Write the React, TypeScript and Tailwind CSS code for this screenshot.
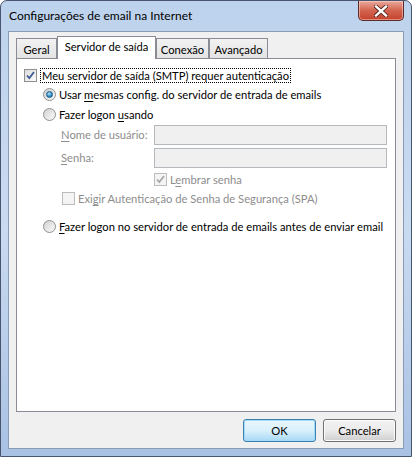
import * as React from "react";

const font = { fontFamily: 'Lato, "Noto Sans", "Segoe UI", Tahoma, sans-serif' };

function CheckBox({ checked, disabled }: { checked?: boolean; disabled?: boolean }) {
  return (
    <span
      className={
        "flex h-[13px] w-[13px] shrink-0 items-center justify-center border " +
        (disabled ? "border-[#bcbcbc] bg-[#f4f4f4]" : "border-[#8e8f8f] bg-gradient-to-br from-[#dcdcdc] to-[#fbfbfb]")
      }
    >
      {checked && (
        <svg width="11" height="11" viewBox="0 0 11 11">
          <path
            d="M2 5.5 L4.3 8 L9 2"
            fill="none"
            stroke={disabled ? "#a8a8a8" : "#3c5a93"}
            strokeWidth="1.8"
          />
        </svg>
      )}
    </span>
  );
}

function Radio({ checked }: { checked?: boolean }) {
  return (
    <span className="flex h-[13px] w-[13px] shrink-0 items-center justify-center rounded-full border border-[#8e8f8f] bg-gradient-to-br from-[#d2d2d2] to-[#fafafa]">
      {checked && (
        <span className="h-[7px] w-[7px] rounded-full border border-[#1d5b86] bg-[radial-gradient(circle_at_40%_35%,#b8e6fb,#2a8ac5_60%,#1c5d8d)]" />
      )}
    </span>
  );
}

function Key({ children }: { children: React.ReactNode }) {
  return <span className="underline underline-offset-2">{children}</span>;
}

function Tab({ label, active, w }: { label: string; active?: boolean; w: string }) {
  if (active) {
    return (
      <div className={"relative z-10 mb-[-1px] flex h-[23px] items-center justify-center whitespace-nowrap border border-b-0 border-[#898c95] bg-white pb-[2px] text-black " + w}>
        {label}
      </div>
    );
  }
  return (
    <div className={"mt-[2px] flex h-[20px] items-center justify-center whitespace-nowrap border border-b-0 border-[#898c95] bg-gradient-to-b from-[#f2f2f2] to-[#e3e3e3] pt-[2px] text-black " + w}>
      {label}
    </div>
  );
}

function Field() {
  return <div className="h-[20px] w-[233px] border border-[#b5b8bd] bg-[#f0f0f0]" />;
}

export default function App() {
  return (
    <div
      className="flex h-[457px] w-[412px] flex-col overflow-hidden rounded-t-[7px] border border-[#47566e] bg-gradient-to-b from-[#bdd2ec] via-[#c9dbf1] to-[#a9c1e3] text-[11.2px] leading-none"
      style={font}
    >
      <div className="flex h-[30px] shrink-0 items-start justify-between">
        <div className="whitespace-nowrap pl-[8px] pt-[9px] text-[12px] text-black">Configurações de email na Internet</div>
        <div className="mr-[7px] flex h-[20px] w-[46px] items-center justify-center rounded-b-[5px] border border-t-0 border-[#5e2c28] bg-gradient-to-b from-[#e9a99c] via-[#d3634f] to-[#c4412c] shadow-[inset_0_0_0_1px_rgba(255,220,210,0.5)]">
          <svg width="14" height="12" viewBox="0 0 14 12">
            <path d="M2 1.5 L12 10.5 M12 1.5 L2 10.5" stroke="#4a1d18" strokeWidth="4" strokeLinecap="square" />
            <path d="M2 1.5 L12 10.5 M12 1.5 L2 10.5" stroke="#ffffff" strokeWidth="2.4" strokeLinecap="square" />
          </svg>
        </div>
      </div>

      <div className="mx-[7px] mb-[7px] flex flex-1 flex-col border border-[#8a9bb5] bg-[#f0f0f0] pl-[7px] pr-[7px]">
        <div className="flex items-end pt-[4px]">
          <Tab label="Geral" w="w-[41px]" />
          <Tab label="Servidor de saída" active w="w-[99px]" />
          <Tab label="Conexão" w="w-[53px]" />
          <Tab label="Avançado" w="w-[59px]" />
        </div>

        <div className="flex h-[354px] flex-col whitespace-nowrap border border-[#898c95] bg-white pl-[7px] pt-[9px] text-black">
          <div className="flex h-[15px] items-center gap-[3px]">
            <CheckBox checked />
            <span className="border border-dotted border-black px-[1px] py-[1px]">
              Meu servid<Key>o</Key>r de saída (SMTP) requer autenticação
            </span>
          </div>

          <div className="mt-[4px] flex h-[15px] items-center gap-[3px] pl-[19px]">
            <Radio checked />
            <span>
              Usar <Key>m</Key>esmas config. do servidor de entrada de emails
            </span>
          </div>

          <div className="mt-[5px] flex h-[15px] items-center gap-[3px] pl-[19px]">
            <Radio />
            <span>
              Fazer logon <Key>u</Key>sando
            </span>
          </div>

          <div className="mt-[3px] flex h-[20px] items-center pl-[37px] text-[#8d8d8d]">
            <span className="w-[93px]">
              <Key>N</Key>ome de usuário:
            </span>
            <Field />
          </div>

          <div className="mt-[3px] flex h-[20px] items-center pl-[37px] text-[#8d8d8d]">
            <span className="w-[93px]">
              <Key>S</Key>enha:
            </span>
            <Field />
          </div>

          <div className="mt-[4px] flex h-[15px] items-center gap-[3px] pl-[130px] text-[#8d8d8d]">
            <CheckBox checked disabled />
            <span>
              L<Key>e</Key>mbrar senha
            </span>
          </div>

          <div className="mt-[4px] flex h-[15px] items-center gap-[3px] pl-[38px] text-[#8d8d8d]">
            <CheckBox disabled />
            <span>
              Exi<Key>g</Key>ir Autenticação de Senha de Segurança (SPA)
            </span>
          </div>

          <div className="mt-[13px] flex h-[15px] items-center gap-[3px] pl-[19px]">
            <Radio />
            <span>
              <Key>F</Key>azer logon no servidor de entrada de emails antes de enviar email
            </span>
          </div>
        </div>

        <div className="flex justify-end gap-[7px] pt-[7px]">
          <button className="flex h-[23px] w-[73px] items-center justify-center rounded-[3px] border border-[#3c7fb1] bg-gradient-to-b from-[#eaf6fd] via-[#d9f0fc] to-[#a7d9f5] text-black shadow-[inset_0_0_0_1px_#a4dbf8]">
            OK
          </button>
          <button className="flex h-[23px] w-[73px] items-center justify-center rounded-[3px] border border-[#707070] bg-gradient-to-b from-[#f2f2f2] via-[#ebebeb] to-[#cfcfcf] text-black shadow-[inset_0_0_0_1px_#fcfcfc]">
            Cancelar
          </button>
        </div>
      </div>
    </div>
  );
}
